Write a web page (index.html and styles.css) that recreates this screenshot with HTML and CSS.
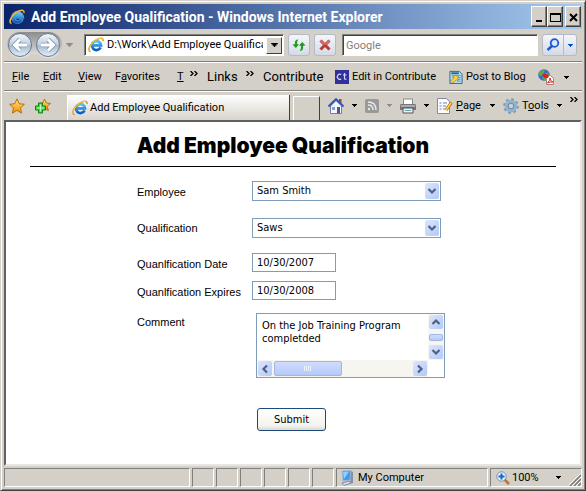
FILE: index.html
```html
<!DOCTYPE html>
<html lang="en">
<head>
<meta charset="utf-8">
<title>Add Employee Qualification</title>
<link rel="stylesheet" href="styles.css">
</head>
<body>
<svg class="defs" aria-hidden="true">
  <defs>
    <linearGradient id="blue" x1="0" y1="0" x2="0" y2="1"><stop offset="0" stop-color="#5cc4f8"/><stop offset="1" stop-color="#0a5cc0"/></linearGradient>
    <linearGradient id="gold" x1="0" y1="0" x2="0" y2="1"><stop offset="0" stop-color="#ffe680"/><stop offset="1" stop-color="#f09000"/></linearGradient>
    <linearGradient id="orb" x1="0" y1="0" x2="0" y2="1"><stop offset="0" stop-color="#f4f8fc"/><stop offset=".48" stop-color="#c3d0df"/><stop offset=".52" stop-color="#a9bbcf"/><stop offset="1" stop-color="#e4f0fa"/></linearGradient>
    <linearGradient id="cradle" x1="0" y1="0" x2="0" y2="1"><stop offset="0" stop-color="#8c8c8c"/><stop offset="1" stop-color="#e8e8e8"/></linearGradient>
  </defs>
  <symbol id="ie" viewBox="0 0 16 16">
    <path d="M12.9 9.8a4.6 4.6 0 1 1 .2-2.2H5" fill="none" stroke="#fff" stroke-width="3.8" opacity=".5"/>
    <path d="M12.6 10.4A4.5 4.5 0 1 1 13 8.300H5" fill="none" stroke="url(#blue)" stroke-width="2.8"/>
    <path d="M2.600 14.600C-1.400 13.600 2.500 6.600 7 3.600C10.500 1.200 15.600-.4 15 4.200" fill="none" stroke="#d99a10" stroke-width="1.600"/>
    <path d="M1.800 13.800C0 11.500 3.500 6 7.500 3.200C10.500 1.200 14 .6 14.700 2.500" fill="none" stroke="#ffe070" stroke-width=".7"/>
  </symbol>
  <symbol id="down" viewBox="0 0 5 3"><path d="M0 0h5v1H4v1H3v1H2V2H1V1H0z"/></symbol>
  <symbol id="more" viewBox="0 0 8 5"><path d="M.5 0l2.500 2.500L.5 5M4.500 0L7 2.500 4.500 5" fill="none" stroke="#000" stroke-width="1.300"/></symbol>
  <symbol id="chev" viewBox="0 0 10 8"><path d="M1.500 2L5 5.500 8.500 2" fill="none" stroke="#4d6185" stroke-width="2.200"/></symbol>
</svg>
<div class="window">
  <header class="titlebar">
    <svg class="i16"><use href="#ie"/></svg>
    <span class="title">Add Employee Qualification - Windows Internet Explorer</span>
    <div class="winbuttons">
      <button class="wb" aria-label="Minimize"><svg viewBox="0 0 13 14"><path d="M3 10h6v2H3z"/></svg></button>
      <button class="wb" aria-label="Maximize"><svg viewBox="0 0 13 14"><path d="M1 3h11v9H1zM2 5v6h9V5z" fill-rule="evenodd"/></svg></button>
      <button class="wb close" aria-label="Close"><svg viewBox="0 0 13 14"><path d="M3 4l7 7M10 4l-7 7" stroke="#000" stroke-width="2"/></svg></button>
    </div>
  </header>

  <div class="navbar">
    <svg class="travel" viewBox="0 0 56 28" role="img" aria-label="Back and forward">
      <path d="M14 1h29a13 13 0 0 1 0 26q-7 0-11-4h-7q-4 4-11 4a13 13 0 0 1 0-26z" fill="url(#cradle)"/>
      <g fill="url(#orb)" stroke="#64788e"><circle cx="14" cy="14" r="11.500"/><circle cx="42" cy="14" r="11.500"/></g>
      <g fill="none" stroke="#8097b0" stroke-width="4.600"><path d="M21 14H10M14 8.500L8.500 14l5.500 5.500M35 14h11M42 8.500l5.500 5.500-5.500 5.500"/></g>
      <g fill="none" stroke="#fff" stroke-width="3"><path d="M21 14H10M14 8.500L8.500 14l5.500 5.500M35 14h11M42 8.500l5.500 5.500-5.500 5.500"/></g>
    </svg>
    <svg class="arrow7 muted"><use href="#down"/></svg>
    <div class="address">
      <svg class="i16"><use href="#ie"/></svg>
      <input aria-label="Address" value="D:\Work\Add Employee Qualification">
      <button class="drop" aria-label="Show addresses"><svg class="arrow7"><use href="#down"/></svg></button>
    </div>
    <button class="tool" aria-label="Refresh"><svg viewBox="0 0 16 16" class="i16"><path d="M8 2Q3.500 2 3.500 6v1H.8l4 4.500 4-4.500H6.500Q6 4 8 2zM8 14.500q4.500 0 4.500-4V9h2.700l-4-4.500L7.200 9h2.300q.5 3.500-1.500 5.500z" fill="#26952a" stroke="#fff" stroke-width=".6"/></svg></button>
    <button class="tool" aria-label="Stop"><svg viewBox="0 0 16 16" class="i16"><path d="M3.500 3.500l9 9M12.500 3.500l-9 9" stroke="#b83b38" stroke-width="3"/><path d="M3.500 3.500l4 4M12.500 3.500l-4 4" stroke="#e07a75" stroke-width="1.500"/></svg></button>
    <input class="search" aria-label="Search" placeholder="Google">
    <div class="searchgo">
      <button aria-label="Search"><svg viewBox="0 0 16 16" class="i16"><circle cx="9.500" cy="6" r="3.800" fill="#dceaff" stroke="#1c58d8" stroke-width="1.800"/><path d="M7 9l-4.500 4" stroke="#1c58d8" stroke-width="2.400"/></svg></button>
      <button aria-label="Search options"><svg class="arrow5 blue"><use href="#down"/></svg></button>
    </div>
  </div>

  <nav class="menubar">
    <a href="#"><u>F</u>ile</a><a href="#"><u>E</u>dit</a><a href="#"><u>V</u>iew</a><a href="#">F<u>a</u>vorites</a><a href="#"><u>T</u></a>
    <svg class="more"><use href="#more"/></svg>
    <span class="band">Links</span>
    <svg class="more"><use href="#more"/></svg>
    <span class="band">Contribute</span>
    <a href="#" class="withicon"><svg class="i14" viewBox="0 0 14 14"><path d="M0 0h14v14H0z" fill="#30309a"/><path d="M6.200 4.500A2.600 2.600 0 1 0 6.200 9M9.500 3v5.500q0 1 2 .7M8 5h3.500" fill="none" stroke="#d8d8ff" stroke-width="1.200"/></svg>Edit in Contribute</a>
    <a href="#" class="withicon"><svg class="i14" viewBox="0 0 14 15"><path d="M.5 1.500h10l3 3v10H.5z" fill="#b8dcf0" stroke="#28668c"/><path d="M2 2.500h8v2H2z" fill="#28668c"/><path d="M3 6h9M3 8h9M8 10h4M8 12h4" stroke="#5a9bc0"/><path d="M3 6h6v6L7.500 10.500 3.500 14 1 12l4-3.500z" fill="#ffd23c" stroke="#9a7000" stroke-width=".6"/></svg>Post to Blog</a>
    <span class="withicon pdf"><svg class="i16" viewBox="0 0 16 16"><circle cx="6" cy="6" r="5.800" fill="#3570c8"/><path d="M1 4q3-4 6-3L5 5 3 7 1 6zM6 6l4-3 1 4-4 5-3-3z" fill="#58b040"/><path d="M8.500 6.500h4l3 3v6h-7z" fill="#fff" stroke="#b08080"/><path d="M4 5h5l2 2-1 2H6z" fill="#e02020"/><path d="M9.500 14q3-3 2.500-5 0 3 3 4-3-.5-5.500 1z" fill="none" stroke="#e02020"/></svg><svg class="arrow5"><use href="#down"/></svg></span>
  </nav>

  <div class="tabbar">
    <svg class="i16" viewBox="0 0 16 16"><path d="M8 .8l2.200 4.900 5.200.6-3.900 3.500 1.100 5.300L8 12.400l-4.600 2.700 1.100-5.300L.6 6.300l5.200-.6z" fill="url(#gold)" stroke="#b87010"/></svg>
    <svg class="i16 addfav" viewBox="0 0 16 16"><path d="M9.500 1l1.800 4 4.200.5-3.200 2.800 1 4.300-3.800-2.200-3.800 2.200 1-4.300L3.500 5.500 7.700 5z" fill="url(#gold)" stroke="#b87010"/><path d="M3.500 5h4v3h3v4h-3v3h-4v-3h-3V8h3z" fill="#48d848" stroke="#148018"/><path d="M5.500 6.500v7M2 10h7" stroke="#c0ffc0"/></svg>
    <div class="tab"><svg class="i16"><use href="#ie"/></svg><span>Add Employee Qualification</span></div>
    <button class="newtab" aria-label="New tab"></button>
    <div class="cmds">
      <svg class="i16" viewBox="0 0 16 16"><path d="M11 1h2.500v4H11z" fill="#b04030"/><path d="M2.500 8L8 2.500 13.500 8v7.500h-11z" fill="#f4f6fc" stroke="#7080a8"/><path d="M.5 8.500L8 1.200l7.500 7.300" fill="none" stroke="#3858b0" stroke-width="2"/><path d="M4 9h3v3H4z" fill="#80a0e0"/><path d="M9 9h3v6.500H9z" fill="#4a5a90"/></svg>
      <svg class="arrow5"><use href="#down"/></svg>
      <svg class="i14" viewBox="0 0 14 14"><rect width="14" height="14" rx="2" fill="#999"/><path d="M3 6q5 0 5 5M3 3q8 0 8 8" fill="none" stroke="#e8e8e8" stroke-width="1.500"/><circle cx="4" cy="10" r="1.200" fill="#e8e8e8"/></svg>
      <svg class="arrow5 muted"><use href="#down"/></svg>
      <svg class="i16" viewBox="0 0 16 16"><path d="M3.500 1h9v7h-9z" fill="#fff" stroke="#888"/><path d="M1 6h14q1 0 1 2v4H0V8q0-2 1-2z" fill="#777"/><path d="M1 7h14v2H1z" fill="#aaa"/><path d="M3 10h10v5H3z" fill="#e8f0f4" stroke="#555"/><path d="M5 12.500h6" stroke="#58a8b8"/></svg>
      <svg class="arrow5"><use href="#down"/></svg>
      <span class="cmd"><svg class="i16" viewBox="0 0 16 16"><path d="M.5.5h9l3 3v12H.5z" fill="#fcfcff" stroke="#8888a0"/><path d="M2.500 5h2M6 5h4M2.500 8h2M6 8h3M2.500 11h2M6 11h2" stroke="#7080b0"/><path d="M14.500 4.500L9 12" stroke="#c07810" stroke-width="3"/><path d="M14 5L9 12" stroke="#ffd860" stroke-width="1.300"/></svg><span><u>P</u>age</span></span>
      <svg class="arrow5"><use href="#down"/></svg>
      <span class="cmd"><svg class="i16" viewBox="0 0 16 16"><circle cx="8" cy="8" r="6.800" fill="none" stroke="#7898b4" stroke-width="2" stroke-dasharray="2.700 2.640"/><circle cx="8" cy="8" r="4.500" fill="#d4d0c8" stroke="#90b4d0" stroke-width="3.600"/><circle cx="8" cy="8" r="2.800" fill="none" stroke="#58789a" stroke-width=".8"/></svg><span>T<u>o</u>ols</span></span>
      <svg class="arrow5"><use href="#down"/></svg>
      <svg class="more"><use href="#more"/></svg>
    </div>
  </div>

  <main class="page">
    <h1>Add Employee Qualification</h1>
    <form onsubmit="return false">
      <label for="emp">Employee</label>
      <div class="pick"><select id="emp"><option>Sam Smith</option></select><span class="knob"><svg><use href="#chev"/></svg></span></div>
      <label for="qual">Qualification</label>
      <div class="pick second"><select id="qual"><option>Saws</option></select><span class="knob"><svg><use href="#chev"/></svg></span></div>
      <label for="qdate">Quanlfication Date</label>
      <input id="qdate" value="10/30/2007">
      <label for="qexp">Quanlfication Expires</label>
      <input id="qexp" value="10/30/2008">
      <label for="comment" class="top">Comment</label>
      <div class="memo">
        <textarea id="comment">On the Job Training Program
completded</textarea>
        <div class="vbar"><span class="knob"><svg class="up"><use href="#chev"/></svg></span><span class="thumb"></span><span class="knob"><svg><use href="#chev"/></svg></span></div>
        <div class="hbar"><span class="knob"><svg class="left"><use href="#chev"/></svg></span><span class="thumb"><svg viewBox="0 0 8 5"><path d="M.5 0v5M2.500 0v5M4.500 0v5M6.500 0v5" stroke="#eef4ff"/></svg></span><span class="knob"><svg class="right"><use href="#chev"/></svg></span></div>
      </div>
      <button class="submit">Submit</button>
    </form>
  </main>

  <footer class="status">
    <div class="grow"></div><div></div><div></div><div></div><div></div><div></div><div></div>
    <div class="zone"><svg class="i16" viewBox="0 0 16 16"><path d="M3 1l9-.5L11 10l-7 1z" fill="#3c9cf0" stroke="#a8b8cc"/><path d="M4 2l6-.5L5 9z" fill="#90d0ff"/><path d="M12 1l2 1v11l-3 1z" fill="#8890a8"/><path d="M3 13l7-2 2 2-7 2.500z" fill="#d8dce8" stroke="#8088a0"/></svg>My Computer</div>
    <div class="zoom"><svg class="i14" viewBox="0 0 14 14"><path d="M8 8l5 5" stroke="#b87838" stroke-width="2.600"/><circle cx="5.500" cy="5.500" r="4.700" fill="#e4f2ff" stroke="#7890b0"/><path d="M5.500 2.500v6M2.500 5.500h6" stroke="#1868c8" stroke-width="2"/></svg>100%<svg class="arrow5"><use href="#down"/></svg>
      <svg class="grip" viewBox="0 0 12 12"><path d="M1 12L12 1M5 12l7-7M9 12l3-3" stroke="#808080" stroke-width="1.600"/><path d="M0 11L11 0M3 12l9-9M7 12l5-5" stroke="#fff"/></svg></div>
  </footer>
</div>
</body>
</html>
```
FILE: styles.css
```css
* { box-sizing: border-box; }
body {
  margin: 0;
  font: 11px/14px Roboto, "Noto Sans", sans-serif;
  color: #000;
  background: #d4d0c8;
}
button, input, select, textarea { font: inherit; color: inherit; margin: 0; padding: 0; border: 0; border-radius: 0; outline: 0; }
a { color: inherit; text-decoration: none; }
svg { display: block; flex: none; }
.defs { position: absolute; width: 0; height: 0; }
.i16 { width: 16px; height: 16px; }
.i14 { width: 14px; height: 14px; }
.arrow5 { width: 5px; height: 3px; }
.arrow7 { width: 7px; height: 4px; }
.more { width: 8px; height: 5px; }
.muted { fill: #8c8c8c; }
.blue { fill: #0050d0; }

.window {
  min-height: 100vh;
  display: flex;
  flex-direction: column;
  padding: 3px 3px 0 3px;
  border: 1px solid;
  border-color: #d4d0c8 #404040 #404040 #d4d0c8;
  box-shadow: inset 1px 1px #fff, inset -1px -1px #808080;
}

.titlebar {
  display: flex;
  align-items: center;
  height: 25px;
  padding: 0 1px 0 5px;
  gap: 6px;
  background: linear-gradient(90deg, #0a246a, #a6caf0);
}
.title { flex: 1; color: #fff; font: bold 14px/20px Roboto, "Noto Sans", sans-serif; white-space: nowrap; }
.winbuttons { display: flex; }
.wb {
  width: 16px;
  height: 21px;
  display: grid;
  place-items: center;
  background: #d4d0c8;
  border: 1px solid;
  border-color: #fff #404040 #404040 #fff;
  box-shadow: inset -1px -1px #808080;
}
.wb svg { width: 13px; height: 14px; }
.close { margin-left: 2px; }

.navbar { display: flex; align-items: center; height: 33px; padding: 0 5px 0 2px; border-bottom: 1px solid #808080; box-shadow: 0 1px #fff; }
.travel { width: 56px; height: 28px; }
.navbar > .muted { margin: 0 11px 0 4px; }
.address { display: flex; align-items: center; gap: 3px; width: 200px; height: 22px; padding: 1px 1px 1px 3px; background: #fff; border: 1px solid; border-color: #808080 #fff #fff #808080; box-shadow: inset 1px 1px #404040; }
.address input { flex: 1; min-width: 0; }
.drop { width: 16px; height: 17px; display: grid; place-items: center; background: #d4d0c8; border: 1px solid; border-color: #fff #404040 #404040 #fff; }
.tool, .searchgo { height: 22px; background: linear-gradient(#f4f6fa, #d4dae6); border: 1px solid #b4bac6; border-radius: 3px; }
.tool { width: 22px; display: grid; place-items: center; margin-left: 4px; }
.search { flex: 1; min-width: 0; height: 22px; margin: 0 4px 0 6px; padding: 0 3px; background: #fff; border: 1px solid; border-color: #808080 #fff #fff #808080; box-shadow: inset 1px 1px #404040; }
.search::placeholder { color: #808080; opacity: 1; }
.searchgo { display: flex; width: 35px; }
.searchgo button { flex: 1; display: grid; place-items: center; background: none; }
.searchgo button + button { flex: 0 0 13px; border-left: 1px solid #b4bac6; }

.menubar {
  display: grid;
  grid-template-columns: 31px 35px 37px 62px 13px 17px 39px 17px 72px 114px 89px 1fr;
  align-items: center;
  height: 29px;
  padding: 2px 0 0 8px;
  border-bottom: 1px solid #808080;
  box-shadow: 0 1px #fff;
  white-space: nowrap;
}
.menubar .more { margin-bottom: 8px; }
.band { font-size: 13px; }
.withicon { display: flex; align-items: center; gap: 3px; }
.pdf { gap: 10px; }

.tabbar { display: flex; align-items: center; height: 29px; padding: 0 4px 0 5px; }
.addfav { margin-left: 10px; }
.tab { flex: 1; display: flex; align-items: center; gap: 2px; height: 25px; align-self: flex-end; margin-left: 16px; padding-left: 4px; background: linear-gradient(#fff, #d8d4cc); border-left: 1px solid #fff; border-right: 1px solid #404040; white-space: nowrap; }
.newtab { width: 27px; height: 24px; align-self: flex-end; margin: 0 8px 0 3px; background: #d4d0c8; border: solid; border-width: 1px 1px 0; border-color: #fff #404040 #fff #fff; }
.cmds { display: flex; align-items: center; gap: 8px; }
.cmd { display: flex; align-items: center; gap: 3px; }
.cmd span { min-width: 26px; }
.cmds .more { margin-bottom: 12px; }

.page {
  flex: 1;
  background: #fff;
  border: 2px solid;
  border-color: #606060 #e8e6e0 #e8e6e0 #606060;
}
h1 {
  margin: 0 24px;
  padding: 12px 20px 8px 0;
  border-bottom: 1px solid #000;
  font: 900 21px/24px Inter, "Liberation Sans", sans-serif;
  text-align: center;
}
form { display: grid; grid-template-columns: 115px 1fr; align-items: center; justify-items: start; padding: 14px 24px 24px 131px; font-family: "DejaVu Sans Condensed", "Noto Sans", sans-serif; }
label { font: 11px/14px "Liberation Sans", Arial, sans-serif; white-space: nowrap; }
form > input, .pick, .memo { border: 1px solid #7f9db9; background: #fff; }
form > input { width: 84px; height: 19px; padding: 0 4px 1px; margin-bottom: 9px; }
form > input + label { margin-bottom: 6px; }
.pick { display: flex; width: 189px; height: 20px; margin-bottom: 17px; }
label[for="emp"] { margin-bottom: 16px; }
label[for="qual"], .second { margin-bottom: 15px; }
label[for="qdate"] { margin-bottom: 6px; }
.pick select { flex: 1; appearance: none; background: none; padding: 0 4px 1px; }
.knob { display: grid; place-items: center; width: 14px; height: 16px; margin: 1px; border-radius: 2px; background: linear-gradient(135deg, #dce6fd, #b4c8f6); }
.knob svg { width: 10px; height: 8px; }
.up { transform: rotate(180deg); }
.left { transform: rotate(90deg); }
.right { transform: rotate(-90deg); }
label.top { align-self: start; padding-top: 6px; margin: 0; }
.memo { display: grid; grid-template: 46px 17px / 1fr 16px; width: 189px; margin: 4px 0 30px 4px; }
.memo textarea { width: 100%; height: 46px; padding: 5px; line-height: 13px; resize: none; overflow: hidden; background: none; white-space: pre; }
.vbar, .hbar { display: flex; background: #f6f5f0; }
.vbar { flex-direction: column; justify-content: space-between; }
.vbar .knob { height: 14px; }
.vbar .thumb { height: 7px; margin: 0 1px; }
.hbar .knob { height: 15px; }
.hbar .thumb { width: 68px; margin: 1px auto 1px 1px; }
.thumb { display: grid; place-items: center; border: 1px solid #a0b6e8; border-radius: 2px; background: linear-gradient(#cfdcfd, #b6c9f8); }
.thumb svg { width: 8px; height: 5px; }
.submit { grid-column: 2; margin-left: 5px; width: 69px; height: 23px; border: 1px solid #1c4a7c; border-radius: 3px; background: linear-gradient(#fff, #f4f3ee 80%, #dcd8ce); }

.status { display: flex; gap: 2px; height: 24px; padding: 2px 0 3px; }
.status > div { width: 22px; display: flex; align-items: center; border: 1px solid; border-color: #808080 #fff #fff #808080; }
.status .grow { flex: 1; }
.status .zone { width: 152px; gap: 3px; padding-left: 2px; }
.status .zoom { width: 92px; gap: 2px; padding-left: 5px; }
.zoom .arrow5 { margin-left: 15px; }
.grip { width: 12px; height: 12px; margin-left: auto; align-self: flex-end; }
```
